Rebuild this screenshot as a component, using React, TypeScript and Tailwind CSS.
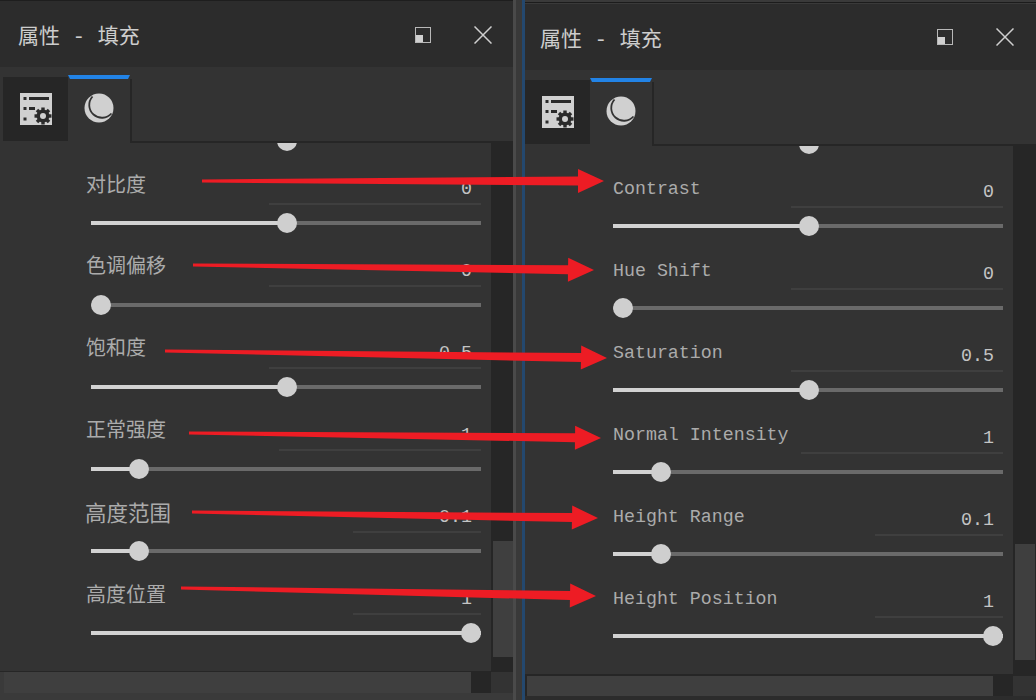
import React from 'react';

type RowData = { label: string; value: string; frac: number; inputW: string; labelTop: string };

const leftRows: RowData[] = [
  { label: '对比度', value: '0', frac: 0.503, inputW: 'w-[212px]', labelTop: 'mt-[21px]' },
  { label: '色调偏移', value: '0', frac: 0, inputW: 'w-[212px]', labelTop: 'mt-[20px]' },
  { label: '饱和度', value: '0.5', frac: 0.503, inputW: 'w-[212px]', labelTop: 'mt-[20px]' },
  { label: '正常强度', value: '1', frac: 0.103, inputW: 'w-[202px]', labelTop: 'mt-[20px]' },
  { label: '高度范围', value: '0.1', frac: 0.103, inputW: 'w-[128px]', labelTop: 'mt-[21px] -ml-[6px] !text-[21.5px]' },
  { label: '高度位置', value: '1', frac: 1, inputW: 'w-[128px]', labelTop: 'mt-[21px]' },
];

const rightRows: RowData[] = [
  { label: 'Contrast', value: '0', frac: 0.503, inputW: 'w-[212px]', labelTop: 'mt-[23px]' },
  { label: 'Hue Shift', value: '0', frac: 0, inputW: 'w-[212px]', labelTop: 'mt-[23px]' },
  { label: 'Saturation', value: '0.5', frac: 0.503, inputW: 'w-[212px]', labelTop: 'mt-[23px]' },
  { label: 'Normal Intensity', value: '1', frac: 0.103, inputW: 'w-[202px]', labelTop: 'mt-[23px]' },
  { label: 'Height Range', value: '0.1', frac: 0.103, inputW: 'w-[128px]', labelTop: 'mt-[23px]' },
  { label: 'Height Position', value: '1', frac: 1, inputW: 'w-[128px]', labelTop: 'mt-[23px]' },
];

const arrows = [
  { x1: 202, y1: 181, x2: 604, y2: 181 },
  { x1: 193, y1: 265, x2: 594, y2: 270 },
  { x1: 165, y1: 351, x2: 607, y2: 358 },
  { x1: 189, y1: 433, x2: 601, y2: 438 },
  { x1: 192, y1: 512, x2: 598, y2: 518 },
  { x1: 181, y1: 588, x2: 596, y2: 596 },
];

const arrowPoints = ({ x1, y1, x2, y2 }: { x1: number; y1: number; x2: number; y2: number }) => {
  const len = Math.hypot(x2 - x1, y2 - y1);
  const ux = (x2 - x1) / len;
  const uy = (y2 - y1) / len;
  const at = (along: number, side: number) =>
    `${(x1 + ux * along - uy * side).toFixed(1)},${(y1 + uy * along + ux * side).toFixed(1)}`;
  const base = len - 26;
  return [at(0, -1.5), at(base, -4.5), at(base, -12), at(len, 0), at(base, 12), at(base, 4.5), at(0, 1.5)].join(' ');
};

const ListIcon = () => (
  <svg width="32" height="32" viewBox="0 0 32 32">
    <rect width="32" height="32" fill="#d0d0d0" />
    <g fill="#2a2a2a">
      <rect x="3.5" y="4" width="3" height="3" />
      <rect x="9" y="4" width="20" height="3" />
      <rect x="3.5" y="14" width="3" height="3" />
      <rect x="9" y="14" width="6" height="3" />
      <rect x="3.5" y="24.500" width="3" height="3" />
    </g>
    <g fill="#2a2a2a">
      <circle cx="23" cy="23" r="6.500" />
      {[0, 45, 90, 135, 180, 225, 270, 315].map(a => (
        <rect key={a} x="21.300" y="14.500" width="3.400" height="4" transform={`rotate(${a} 23 23)`} />
      ))}
    </g>
    <circle cx="23" cy="23" r="3" fill="#d0d0d0" />
  </svg>
);

const MoonIcon = () => (
  <svg width="30" height="30" viewBox="0 0 30 30">
    <circle cx="15" cy="15" r="14.500" fill="#d0d0d0" />
    <path d="M8.500 3.500 A12 12 0 0 0 27.500 20.500" fill="none" stroke="#333333" strokeWidth="1.800" />
  </svg>
);

const WindowIcon = () => (
  <svg width="16" height="16" viewBox="0 0 16 16">
    <rect x="0.500" y="0.500" width="15" height="15" fill="#2c2c2c" stroke="#b8b8b8" />
    <rect x="1" y="8" width="7" height="7" fill="#d0d0d0" />
  </svg>
);

const CloseIcon = () => (
  <svg width="18" height="18" viewBox="0 0 18 18">
    <path d="M0.500 0.500 L17.500 17.500 M17.500 0.500 L0.500 17.500" stroke="#cfcfcf" strokeWidth="1.500" fill="none" />
  </svg>
);

const Slider = ({ frac }: { frac: number }) => (
  <div className="relative h-5 w-full flex items-center">
    <div className="h-1 w-full bg-[#6a6a6a]" />
    <div className="absolute left-0 h-1 bg-[#d2d2d2]" style={{ width: `${frac * 100}%` }} />
    <div
      className="absolute size-5 rounded-full bg-[#cfcfcf]"
      style={{ left: `calc((100% - 20px) * ${frac})` }}
    />
  </div>
);

const Row = ({ row, labelClass }: { row: RowData; labelClass: string }) => (
  <div className="h-[82px] flex flex-col">
    <div className="h-[62px] flex justify-between">
      <div className={`h-6 leading-6 whitespace-nowrap ${labelClass} ${row.labelTop}`}>{row.label}</div>
      <div className={`${row.inputW} h-[54px] pt-[26px]`}>
        <div className="h-6 pr-[9px] text-right leading-6 text-[18.3px] text-[#c4c4c4] font-['Liberation_Mono',monospace]">
          {row.value}
        </div>
        <div className="mt-[2px] h-[2px] bg-[#3f3f3f]" />
      </div>
    </div>
    <Slider frac={row.frac} />
  </div>
);

const TitleBar = ({ className, textClass }: { className: string; textClass: string }) => (
  <div className={`flex items-center justify-between bg-[#2c2c2c] ${className}`}>
    <span className={`text-[21px] text-[#cdcdcd] font-['Liberation_Mono','Noto_Sans_CJK_SC',monospace] ${textClass}`}>
      属性 - 填充
    </span>
    <div className="flex items-center gap-[43px]">
      <WindowIcon />
      <CloseIcon />
    </div>
  </div>
);

const TabStrip = ({ className }: { className: string }) => (
  <div className={`h-[76px] flex bg-[#333333] ${className}`}>
    <div className="mt-[10px] h-[64px] w-[65px] bg-[#262626] flex items-center justify-center">
      <ListIcon />
    </div>
    <div className="mt-[8px] w-[62px] flex flex-col">
      <div className="h-1 bg-[#2283e6] [clip-path:polygon(0_0,100%_0,calc(100%-2px)_100%,2px_100%)]" />
      <div className="flex-1 flex items-center justify-center pb-[6px]">
        <MoonIcon />
      </div>
    </div>
    <div className="mt-[12px] flex-1 border-l-2 border-b-2 border-[#262626]" />
  </div>
);

const Scrollbar = ({ className }: { className: string }) => (
  <div className={`bg-[#262626] pt-[398px] pl-[2px] ${className}`}>
    <div className="h-[116px] w-5 bg-[#3f3f3f]" />
  </div>
);

export default function App() {
  return (
    <div className="relative h-[700px] w-[1036px] overflow-hidden bg-[#333333] flex">
      {/* left panel, chinese labels */}
      <div className="w-[513px] flex flex-col">
        <div className="h-[3px] bg-[#2c2c2c]">
          <div className="h-px bg-[#1e1e1e]" />
        </div>
        <TitleBar className="h-16 pl-[18px] pr-[21px]" textClass="mt-[6px]" />
        <TabStrip className="pl-[3px]" />
        <div className="h-[528px] flex">
          <div className="w-[491px] overflow-hidden pl-[91px] pr-[10px]">
            <div className="h-2 overflow-hidden">
              <div className="-mt-3">
                <Slider frac={0.503} />
              </div>
            </div>
            {leftRows.map(r => (
              <Row key={r.label} row={r} labelClass="-ml-[5px] text-[20px] text-[#ababab] font-['Noto_Sans_CJK_SC',sans-serif]" />
            ))}
          </div>
          <Scrollbar className="flex-1" />
        </div>
        <div className="h-px bg-[#262626]" />
        <div className="h-[21px] flex">
          <div className="w-1 bg-[#3a3a3a]" />
          <div className="w-[467px] bg-[#3f3f3f]" />
          <div className="w-5 bg-[#262626]" />
          <div className="flex-1 bg-[#333333]" />
        </div>
        <div className="flex-1 bg-[#3a3a3a]" />
      </div>

      {/* splitter */}
      <div className="w-[3px] bg-[#4a4a4a]" />
      <div className="w-[6px] bg-[#393939]" />
      <div className="w-[3px] bg-[#24486e]" />

      {/* right panel, english labels */}
      <div className="flex-1 flex flex-col">
        <div className="h-1 bg-[#3a3a3a]">
          <div className="mt-[2px] h-px bg-[#1c1c1c]" />
        </div>
        <TitleBar className="h-[66px] pl-[15px] pr-[22px]" textClass="mt-[8px]" />
        <TabStrip className="" />
        <div className="h-[528px] flex">
          <div className="w-[488px] overflow-hidden pl-[88px] pr-[10px]">
            <div className="h-2 overflow-hidden">
              <div className="-mt-3">
                <Slider frac={0.503} />
              </div>
            </div>
            {rightRows.map(r => (
              <Row key={r.label} row={r} labelClass="text-[18.3px] text-[#ababab] font-['Liberation_Mono',monospace]" />
            ))}
          </div>
          <Scrollbar className="flex-1" />
        </div>
        <div className="h-[2px] bg-[#262626]" />
        <div className="h-5 flex">
          <div className="w-[2px] bg-[#262626]" />
          <div className="w-[466px] bg-[#3f3f3f]" />
          <div className="w-5 bg-[#262626]" />
          <div className="flex-1 bg-[#333333]" />
        </div>
        <div className="flex-1 bg-[#2c2c2c]" />
      </div>

      {/* annotation arrows on top of the two panels */}
      <svg className="absolute inset-0 pointer-events-none" width="1036" height="700" viewBox="0 0 1036 700">
        {arrows.map(a => (
          <polygon key={a.x1} points={arrowPoints(a)} fill="#ed1c24" />
        ))}
      </svg>
    </div>
  );
}
